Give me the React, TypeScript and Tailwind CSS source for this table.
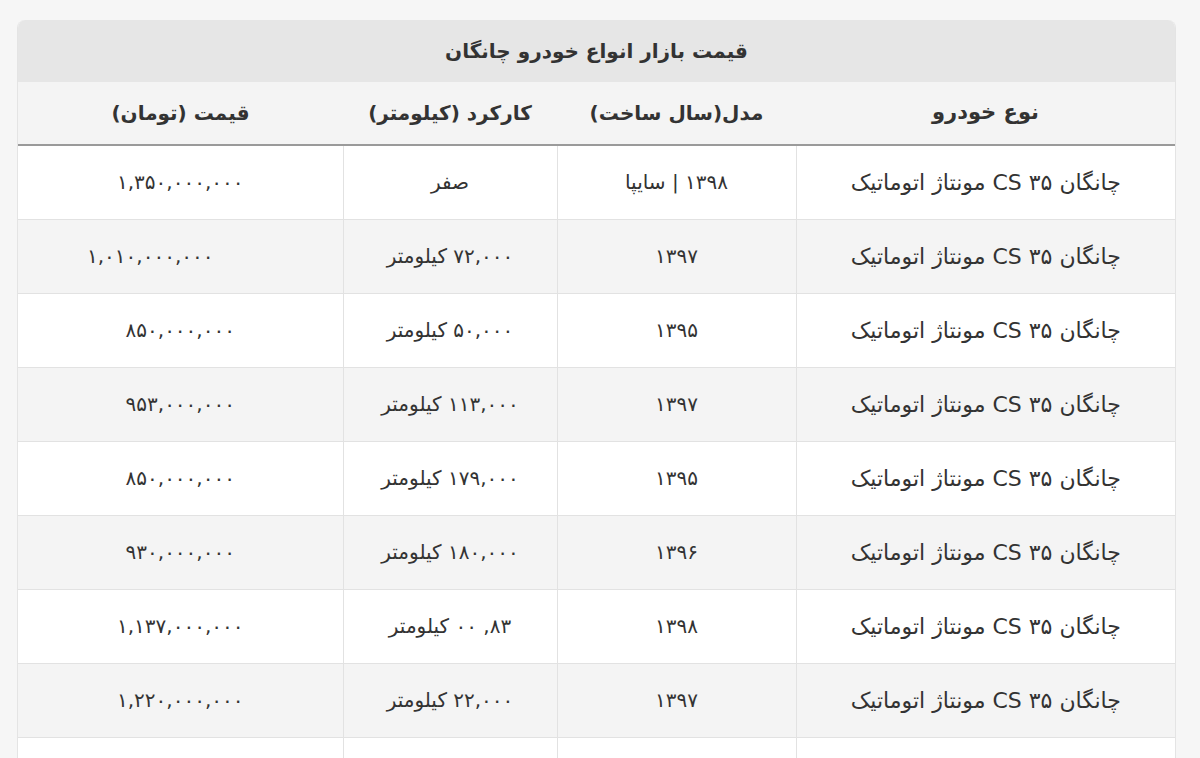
const rows = [
  { car: 'چانگان ۳۵ CS مونتاژ اتوماتیک', model: '۱۳۹۸ | سایپا', km: 'صفر', price: '۱,۳۵۰,۰۰۰,۰۰۰' },
  { car: 'چانگان ۳۵ CS مونتاژ اتوماتیک', model: '۱۳۹۷', km: '۷۲,۰۰۰ کیلومتر', price: '۱,۰۱۰,۰۰۰,۰۰۰', shift: true },
  { car: 'چانگان ۳۵ CS مونتاژ اتوماتیک', model: '۱۳۹۵', km: '۵۰,۰۰۰ کیلومتر', price: '۸۵۰,۰۰۰,۰۰۰' },
  { car: 'چانگان ۳۵ CS مونتاژ اتوماتیک', model: '۱۳۹۷', km: '۱۱۳,۰۰۰ کیلومتر', price: '۹۵۳,۰۰۰,۰۰۰' },
  { car: 'چانگان ۳۵ CS مونتاژ اتوماتیک', model: '۱۳۹۵', km: '۱۷۹,۰۰۰ کیلومتر', price: '۸۵۰,۰۰۰,۰۰۰' },
  { car: 'چانگان ۳۵ CS مونتاژ اتوماتیک', model: '۱۳۹۶', km: '۱۸۰,۰۰۰ کیلومتر', price: '۹۳۰,۰۰۰,۰۰۰' },
  { car: 'چانگان ۳۵ CS مونتاژ اتوماتیک', model: '۱۳۹۸', km: '۸۳, ۰۰ کیلومتر', price: '۱,۱۳۷,۰۰۰,۰۰۰' },
  { car: 'چانگان ۳۵ CS مونتاژ اتوماتیک', model: '۱۳۹۷', km: '۲۲,۰۰۰ کیلومتر', price: '۱,۲۲۰,۰۰۰,۰۰۰' },
];

const App = () => {
  return (
    <div className="min-h-screen bg-[#f6f6f6] pt-5 pl-[17px] pr-6 font-['DejaVu_Sans',sans-serif] text-[#333]" dir="rtl">
      <div className="w-[1159px] overflow-hidden rounded-t-lg border-x border-[#e4e4e4] bg-white">
        <div className="flex h-[62px] items-center justify-center bg-[#e6e6e6] text-[20px] font-bold">
          قیمت بازار انواع خودرو چانگان
        </div>
        <table className="w-full table-fixed border-collapse text-[20px]">
          <colgroup>
            <col className="w-[379px]" />
            <col className="w-[239px]" />
            <col className="w-[214px]" />
            <col />
          </colgroup>
          <thead>
            <tr className="h-[63px] border-b-2 border-[#9a9a9a] bg-[#f4f4f4] font-bold">
              <th className="text-[21px]">نوع خودرو</th>
              <th>مدل(سال ساخت)</th>
              <th>کارکرد (کیلومتر)</th>
              <th>قیمت (تومان)</th>
            </tr>
          </thead>
          <tbody>
            {rows.map((r, i) => (
              <tr key={i} className={`h-[74px] border-b border-[#e2e2e2] ${i % 2 ? 'bg-[#f4f4f4]' : 'bg-white'}`}>
                <td className="border-l border-[#e2e2e2] text-center text-[22px]">{r.car}</td>
                <td className="border-l border-[#e2e2e2] text-center">{r.model}</td>
                <td className="border-l border-[#e2e2e2] text-center">{r.km}</td>
                <td className={r.shift ? 'pl-[69px] text-left' : 'text-center'}>{r.price}</td>
              </tr>
            ))}
            <tr className="h-[40px] bg-white">
              <td className="border-l border-[#e2e2e2]"></td>
              <td className="border-l border-[#e2e2e2]"></td>
              <td className="border-l border-[#e2e2e2]"></td>
              <td></td>
            </tr>
          </tbody>
        </table>
      </div>
    </div>
  );
};

export default App;
